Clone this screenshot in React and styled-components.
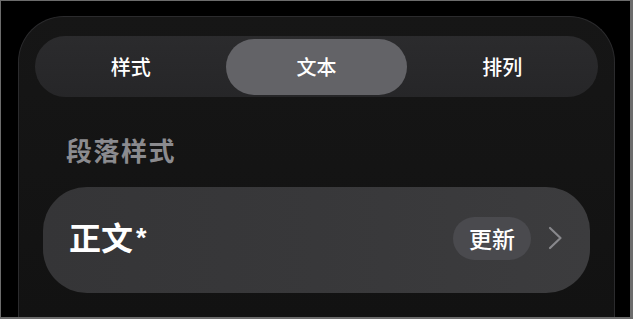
import React, { useState } from "react";
import styled, { createGlobalStyle } from "styled-components";

const Global = createGlobalStyle`
  html, body { margin: 0; padding: 0; background: #000; }
  body { font-family: "Inter", "Noto Sans CJK SC", "Noto Sans", sans-serif; -webkit-font-smoothing: antialiased; }
  * { box-sizing: border-box; }
`;

const Frame = styled.div`
  width: 633px;
  height: 319px;
  background: #000;
  border-style: solid;
  border-color: #6c6c6c;
  border-width: 1px 3px 2px 1px;
  padding: 15px 15px 0 17px;
  overflow: hidden;
  display: flex;
`;

const Panel = styled.div`
  flex: 1;
  border: 1px solid #2b2b2d;
  border-bottom: none;
  border-radius: 46px 46px 0 0;
  background: linear-gradient(180deg, #161616 0%, #121212 100%);
  padding: 19px 16px 0 16px;
  display: flex;
  flex-direction: column;
`;

const Segmented = styled.div`
  height: 61px;
  border-radius: 31px;
  background: linear-gradient(180deg, #2b2b2d 0%, #262628 100%);
  padding: 3px 3px 2px;
  display: grid;
  grid-template-columns: repeat(3, 1fr);
`;

const Segment = styled.button`
  border: none;
  margin: 0 2px;
  border-radius: 28px;
  background: ${(p) => (p.$active ? "#636367" : "transparent")};
  color: #fff;
  font-family: inherit;
  font-size: 20px;
  font-weight: 500;
  display: flex;
  align-items: center;
  justify-content: center;
  padding: 0 0 1px;
  cursor: pointer;
`;

const SectionTitle = styled.div`
  margin: 40px 0 0 31px;
  font-size: 26px;
  letter-spacing: 1.5px;
  line-height: 30px;
  font-weight: 600;
  color: #8b8b8f;
`;

const Card = styled.div`
  margin: 20px 8px 0 8px;
  height: 106px;
  border-radius: 44px;
  background: linear-gradient(90deg, #353537 0%, #38383a 50%, #3c3c3e 100%);
  display: flex;
  align-items: center;
  padding: 0 27px 0 26px;
`;

const CardTitle = styled.div`
  flex: 1;
  font-size: 32px;
  font-weight: 600;
  color: #fff;
  line-height: 1;
  padding-bottom: 2px;
`;

const Star = styled.span`
  font-family: "Liberation Sans", sans-serif;
  font-weight: 700;
  font-size: 27px;
  margin-left: 3px;
  vertical-align: 3px;
`;

const Badge = styled.div`
  height: 43px;
  padding: 0 16px;
  border-radius: 22px;
  background: #4a4a4e;
  color: #fff;
  font-size: 23px;
  font-weight: 500;
  display: flex;
  align-items: center;
  margin-top: -4px;
`;

const Chevron = styled.svg`
  margin-left: 17px;
  margin-top: -4px;
  flex: none;
`;

export default function App() {
  const [tab, setTab] = useState(1);
  const tabs = ["样式", "文本", "排列"];
  return (
    <>
      <Global />
      <Frame>
        <Panel>
          <Segmented>
            {tabs.map((t, i) => (
              <Segment key={t} $active={tab === i} onClick={() => setTab(i)}>
                {t}
              </Segment>
            ))}
          </Segmented>
          <SectionTitle>段落样式</SectionTitle>
          <Card>
            <CardTitle>
              正文<Star>*</Star>
            </CardTitle>
            <Badge>更新</Badge>
            <Chevron width="15" height="24" viewBox="0 0 15 24" fill="none">
              <path d="M2 2 L12.5 12 L2 22" stroke="#88888c" strokeWidth="2.2" strokeLinecap="round" strokeLinejoin="round" />
            </Chevron>
          </Card>
        </Panel>
      </Frame>
    </>
  );
}
